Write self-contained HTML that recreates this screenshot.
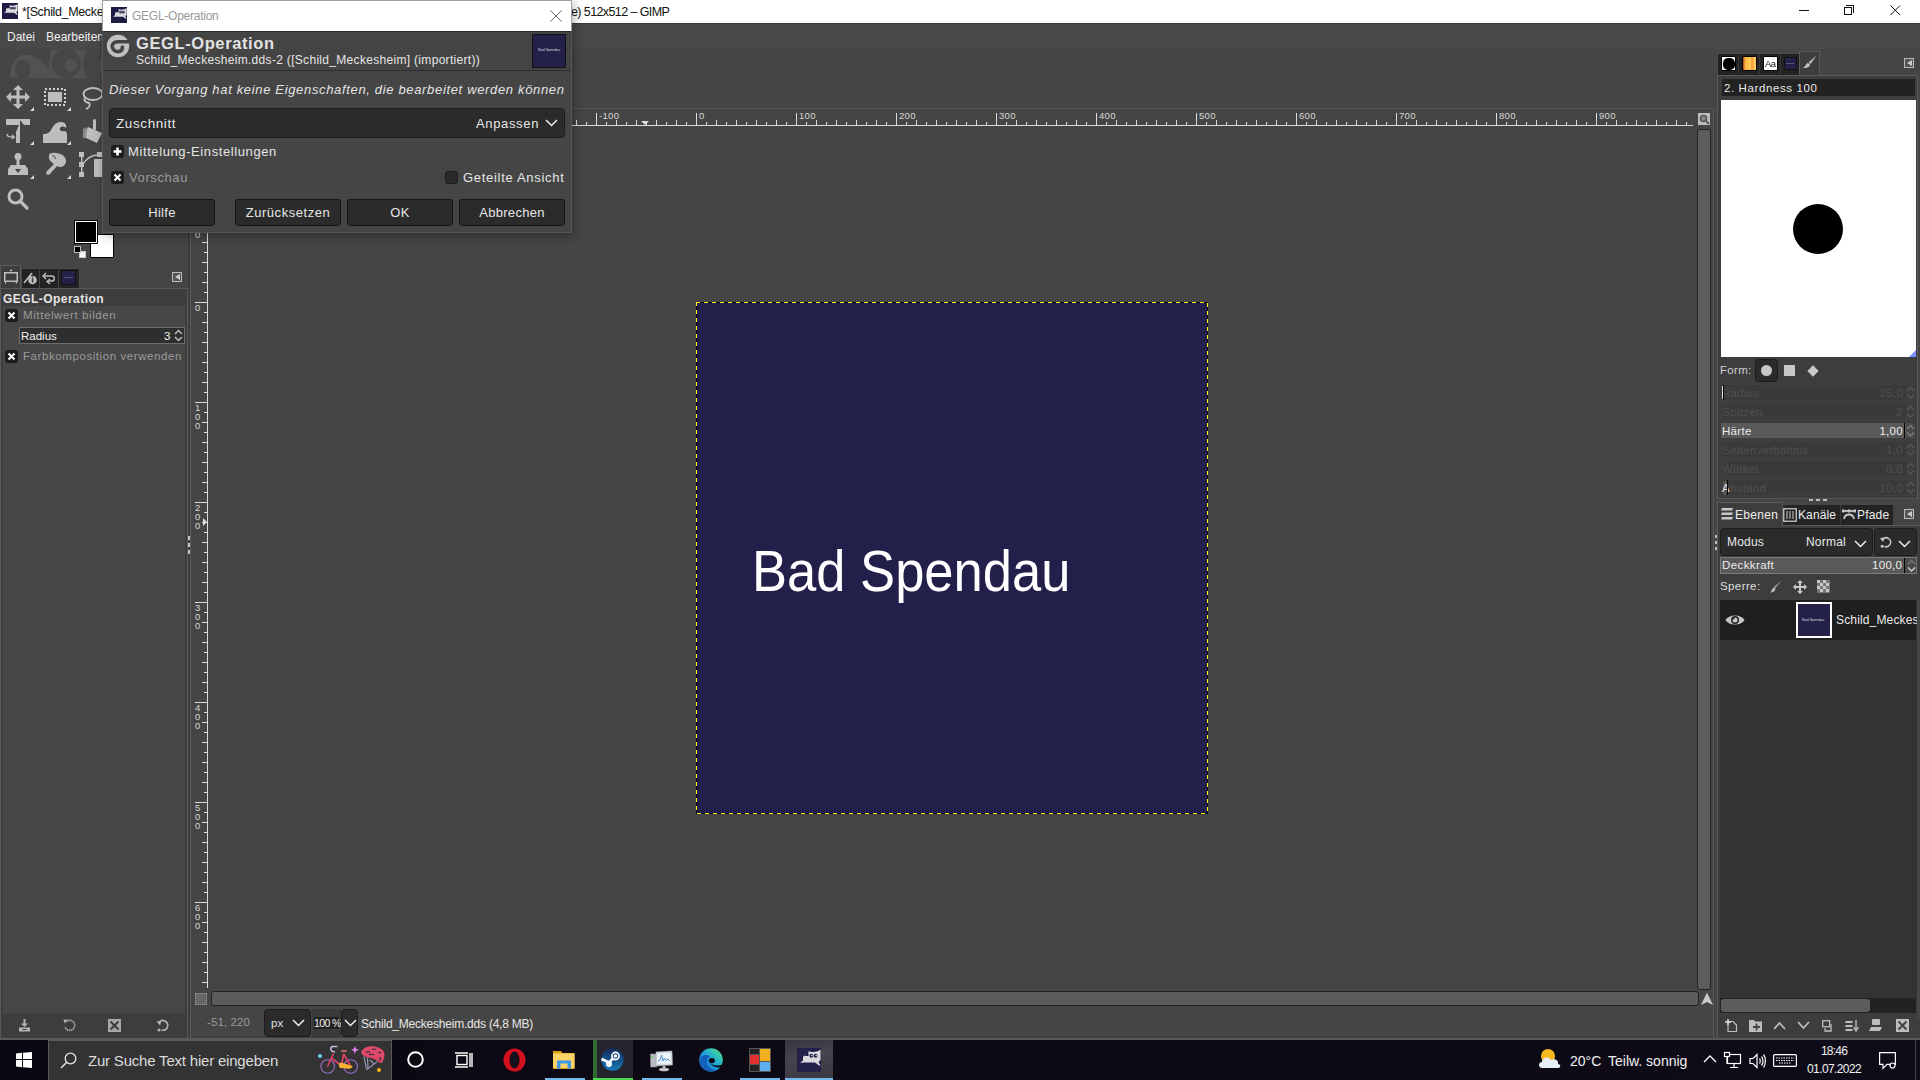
<!DOCTYPE html>
<html><head><meta charset="utf-8">
<style>
*{margin:0;padding:0;box-sizing:border-box}
html,body{width:1920px;height:1080px;overflow:hidden;background:#454545;font-family:"Liberation Sans",sans-serif;color:#e0e0e0}
.a{position:absolute}
.t{position:absolute;white-space:nowrap;line-height:1}
svg{position:absolute;overflow:visible}
</style></head><body>
<!-- ===== title bar ===== -->
<div class="a" style="left:0;top:0;width:1920px;height:23px;background:#fff"></div>
<svg style="left:2px;top:3px" width="16" height="16" viewBox="0 0 24 24"><rect width="24" height="24" fill="#1e1b45"/><path d="M6 9.5 C6 8 7.5 7.5 9 8 L11.5 8 L11.5 3 C14 4.5 20 4.5 23.5 1.5 L23.5 12 L21.5 14 L23.5 17.5 L22 17.5 L18 14.5 L8 14.5 L3 14.8 L6 12.5 Z" fill="#dcdce0"/><circle cx="14.4" cy="7.8" r="2" fill="#23204a"/><circle cx="18.6" cy="7.8" r="2" fill="#23204a"/><circle cx="15" cy="7.6" r="0.8" fill="#dcdce0"/><circle cx="19.2" cy="7.6" r="0.8" fill="#dcdce0"/></svg>
<div class="t" style="left:22px;top:6px;font-size:12.5px;color:#111;letter-spacing:-0.35px">*[Schild_Meckesheim] (importiert)-2.0</div>
<div class="t" style="left:571px;top:6px;font-size:12.5px;color:#111;letter-spacing:-0.6px">e) 512x512 – GIMP</div>
<!-- window controls -->
<div class="a" style="left:1799px;top:10px;width:10px;height:1px;background:#111"></div>
<div class="a" style="left:1844px;top:7px;width:8px;height:8px;border:1px solid #111"></div>
<div class="a" style="left:1846px;top:5px;width:8px;height:8px;border-top:1px solid #111;border-right:1px solid #111"></div>
<svg style="left:1890px;top:5px" width="11" height="11"><path d="M0.5 0.5L10 10M10 0.5L0.5 10" stroke="#111" stroke-width="1"/></svg>

<!-- ===== menu bar ===== -->
<div class="a" style="left:0;top:23px;width:1920px;height:26px;background:#494949"></div><div class="a" style="left:0;top:23px;width:1920px;height:1px;background:#3a3a3a"></div>
<div class="t" style="left:7px;top:31px;font-size:12px;color:#eee">Datei</div>
<div class="t" style="left:46px;top:31px;font-size:12px;color:#eee">Bearbeiten</div>


<!-- ===== left toolbox ===== -->
<div class="a" style="left:0;top:49px;width:188px;height:989px;background:#454545"></div>
<!-- wilber decoration -->
<svg style="left:0;top:0" width="102" height="82">
 <path d="M9.75 78 C9.75 62 18 54.5 26 54.5 C34 54.5 42 60 48.2 69 L51 50 L87.2 50 C84 56 83 60 83 64 C83 70 86 75 88 78 Z" fill="#525252"/>
 <circle cx="66.4" cy="63.6" r="14.4" fill="#464646"/>
 <circle cx="71" cy="65.5" r="6.3" fill="#525252"/>
 <ellipse cx="22.75" cy="69.5" rx="7.5" ry="9.8" fill="#464646"/>
 <rect x="9" y="78" width="80" height="2" fill="#464646"/>
 <path d="M102 56 C100 60 99 64 100 68 C100.5 72 101 74 102 75Z" fill="#525252"/>
</svg>
<!-- tools row1 -->
<svg style="left:6px;top:85px" width="24" height="24" fill="#bdbdbd">
 <path d="M12 0 L17 5 L13.5 5 L13.5 10.5 L19 10.5 L19 7 L24 12 L19 17 L19 13.5 L13.5 13.5 L13.5 19 L17 19 L12 24 L7 19 L10.5 19 L10.5 13.5 L5 13.5 L5 17 L0 12 L5 7 L5 10.5 L10.5 10.5 L10.5 5 L7 5 Z"/>
</svg>
<svg style="left:44px;top:88px" width="22" height="19">
 <rect x="1" y="1" width="20" height="16" fill="none" stroke="#d0d0d0" stroke-width="2" stroke-dasharray="2 2"/>
 <rect x="4" y="4" width="14" height="10" fill="#bdbdbd"/>
</svg>
<svg style="left:81px;top:86px" width="22" height="24">
 <ellipse cx="12" cy="8" rx="9.5" ry="6" fill="none" stroke="#bdbdbd" stroke-width="2"/>
 <path d="M4 12 C2 16 6 16 8 17 C10 19 8 22 5 23" fill="none" stroke="#bdbdbd" stroke-width="2"/>
</svg>
<!-- row2 -->
<svg style="left:6px;top:119px" width="24" height="24" fill="#bdbdbd">
 <path d="M0 0 H24 V6 H18 L14 1 L14 24 H10 V13 L13 6 H0 Z"/>
 <path d="M1 15 C1 18 3 18 8 18 L6 16 M8 18 L6 20" fill="none" stroke="#bdbdbd" stroke-width="1.5"/>
</svg>
<svg style="left:43px;top:121px" width="24" height="22" fill="#bdbdbd">
 <path d="M0 22 V13 C2 13 6 13 8 9 C11 3 14 1 18 1 C22 1 24 4 23 7 C21 5 18 5 17 7 C16 9 18 11 21 10 C22 10 24 11 24 13 V22 Z"/>
</svg>
<svg style="left:82px;top:119px" width="20" height="24" fill="#bdbdbd">
 <rect x="11" y="0" width="3" height="11" rx="1.5"/>
 <path d="M6 8 L20 14 L15 24 L2 18 Z"/>
 <path d="M1 10 L5 8 L4 19 L1 19Z" fill="#8a8a8a"/>
</svg>
<!-- row3 -->
<svg style="left:8px;top:153px" width="20" height="23" fill="#bdbdbd">
 <circle cx="10" cy="3.5" r="3.5"/>
 <rect x="8.5" y="5" width="3" height="8"/>
 <path d="M3 12 H17 L20 16 V22 H0 V16 Z"/>
 <path d="M7 16 L13 16 L10 20Z" fill="#454545"/>
</svg>
<svg style="left:46px;top:153px" width="21" height="22" fill="#bdbdbd">
 <path d="M6 0 C13 -1 21 3 20 9 C19 14 14 15 11 13 L4 21 C2 23 -1 21 1 18 L8 11 C5 9 2 6 3 3 C3 1 4 0 6 0Z"/>
 <path d="M6 3 C8 2 10 4 9 6" fill="none" stroke="#454545" stroke-width="1"/>
</svg>
<svg style="left:79px;top:152px" width="24" height="25" fill="#bdbdbd">
 <rect x="0" y="0" width="5" height="5"/><rect x="0" y="10" width="5" height="5"/><rect x="0" y="20" width="5" height="5"/>
 <rect x="2" y="4" width="1.5" height="17"/>
 <path d="M4 12 C8 6 14 3 19 3" fill="none" stroke="#bdbdbd" stroke-width="1.5"/>
 <rect x="18" y="0" width="5" height="5"/>
 <rect x="15" y="7" width="9" height="18" rx="1"/>
</svg>
<!-- row4 zoom -->
<svg style="left:7px;top:188px" width="22" height="22">
 <circle cx="8.5" cy="8.5" r="6.5" fill="none" stroke="#bdbdbd" stroke-width="3"/>
 <path d="M13 13 L20 20" stroke="#bdbdbd" stroke-width="3.2" stroke-linecap="round"/>
</svg>
<!-- small triangles -->
<svg style="left:0;top:0" width="120" height="220" fill="#d8d8d8">
 <path d="M34 111 L30 111 L34 107Z"/><path d="M71 111 L67 111 L71 107Z"/>
 <path d="M34 145 L30 145 L34 141Z"/><path d="M71 145 L67 145 L71 141Z"/>
 <path d="M34 179 L30 179 L34 175Z"/><path d="M71 179 L67 179 L71 175Z"/>
</svg>
<!-- fg/bg -->
<div class="a" style="left:90px;top:234px;width:24px;height:24px;background:#fff;border:1px solid #000;border-radius:1px"></div>
<div class="a" style="left:74px;top:220px;width:24px;height:24px;background:#000;border-radius:1px"></div>
<div class="a" style="left:75px;top:221px;width:22px;height:22px;border:1px solid #fff"></div>
<div class="a" style="left:79px;top:251px;width:7px;height:7px;background:#f4f4f4;border:1px solid #ccc"></div>
<div class="a" style="left:74px;top:246px;width:7px;height:7px;background:#000;border:1px solid #bbb"></div>

<!-- tool options dock tabs -->
<div class="a" style="left:21px;top:268px;width:59px;height:21px;background:#222;border:1px solid #4a4a4a;border-bottom:none"></div>
<div class="a" style="left:0px;top:265px;width:21px;height:25px;background:#3d3d3d;border:1px solid #5a5a5a;border-bottom:none"></div>
<div class="a" style="left:39px;top:268px;width:1px;height:20px;background:#444"></div>
<div class="a" style="left:58px;top:268px;width:1px;height:20px;background:#444"></div>
<svg style="left:4px;top:270px" width="14" height="14">
 <rect x="0.75" y="2.75" width="12.5" height="8.5" fill="none" stroke="#bdbdbd" stroke-width="1.5"/>
 <path d="M2 11 L1.5 13.5 M12 11 L12.5 13.5 M6 1 L7 0 L8 1" stroke="#bdbdbd" stroke-width="1.2" fill="none"/>
</svg>
<svg style="left:23px;top:271px" width="14" height="14">
 <path d="M1 12 L9 2" stroke="#bdbdbd" stroke-width="1.6"/>
 <circle cx="9.5" cy="9" r="4.3" fill="#bdbdbd"/>
 <rect x="8.8" y="7.5" width="1.5" height="4" fill="#2e2e2e"/><rect x="8.8" y="5.5" width="1.5" height="1.2" fill="#2e2e2e"/>
</svg>
<svg style="left:42px;top:271px" width="14" height="14">
 <path d="M1 5 H10 C13 5 13 10 10 10 H6" fill="none" stroke="#bdbdbd" stroke-width="1.4"/>
 <path d="M4 2 L1 5 L4 8 M8 8 L5 10.5 L8 13" fill="none" stroke="#bdbdbd" stroke-width="1.4"/>
</svg>
<div class="a" style="left:61px;top:270px;width:15px;height:15px;background:#23204a;border:1px solid #111"></div>
<div class="a" style="left:64px;top:277px;width:9px;height:1px;background:#55537a"></div>
<!-- collapse button -->
<div class="a" style="left:172px;top:272px;width:10px;height:10px;border:1px solid #bbb;background:#555"></div>
<svg style="left:174px;top:274px" width="7" height="7"><path d="M6 0 V6 L1 3Z" fill="#ccc"/></svg>

<!-- tool options panel -->
<div class="a" style="left:0px;top:288px;width:188px;height:751px;border:1px solid #5a5a5a;border-bottom:none;background:#3d3d3d"></div>
<div class="t" style="left:3px;top:293px;font-size:12px;font-weight:bold;color:#e6e6e6;letter-spacing:0.45px">GEGL-Operation</div>
<div class="a" style="left:3px;top:306px;width:182px;height:707px;background:#474747"></div>
<div class="a" style="left:5px;top:309px;width:13px;height:13px;background:#1c1c1c;border-radius:3px"></div>
<svg style="left:7px;top:311px" width="9" height="9"><path d="M1.5 1.5 L7.5 7.5 M7.5 1.5 L1.5 7.5" stroke="#fff" stroke-width="2"/></svg>
<div class="t" style="left:23px;top:310px;font-size:11.5px;color:#9a9a9a;letter-spacing:0.6px">Mittelwert bilden</div>
<div class="a" style="left:19px;top:327px;width:166px;height:17px;background:#2e2e2e;border:1px solid #6c6c6c"></div>
<div class="t" style="left:21px;top:331px;font-size:11.5px;color:#f0f0f0">Radius</div>
<div class="t" style="left:164px;top:331px;font-size:11.5px;color:#f0f0f0">3</div>
<svg style="left:174px;top:329px" width="9" height="13"><path d="M1 5 L4.5 1.5 L8 5 M1 8 L4.5 11.5 L8 8" fill="none" stroke="#bbb" stroke-width="1.5"/></svg>
<div class="a" style="left:5px;top:350px;width:13px;height:13px;background:#1c1c1c;border-radius:3px"></div>
<svg style="left:7px;top:352px" width="9" height="9"><path d="M1.5 1.5 L7.5 7.5 M7.5 1.5 L1.5 7.5" stroke="#fff" stroke-width="2"/></svg>
<div class="t" style="left:23px;top:351px;font-size:11.5px;color:#9a9a9a;letter-spacing:0.58px">Farbkomposition verwenden</div>

<!-- bottom buttons -->
<svg style="left:18px;top:1019px" width="13" height="13" fill="#b4b4b4">
 <rect x="5.5" y="0" width="2" height="5"/><path d="M3 4.5 H10 L6.5 8Z"/><path d="M1 8.5 H12 V12.5 H1Z"/><rect x="4.5" y="10" width="4" height="1" fill="#3d3d3d"/>
</svg>
<svg style="left:63px;top:1019px" width="13" height="13"><path d="M3.5 2.5 A5 5 0 1 1 2 8" fill="none" stroke="#b0b0b0" stroke-width="1.6" stroke-dasharray="1.4 0.6"/><path d="M0.5 0.5 L5 0.8 L1.5 4.5Z" fill="#b0b0b0"/></svg>
<svg style="left:108px;top:1019px" width="13" height="13"><rect width="13" height="13" fill="#a8a8a8"/><path d="M2.5 2.5L10.5 10.5M10.5 2.5L2.5 10.5" stroke="#3d3d3d" stroke-width="2"/></svg>
<svg style="left:156px;top:1019px" width="13" height="13"><path d="M3.5 3 A4.8 4.8 0 1 1 5.5 11" fill="none" stroke="#b4b4b4" stroke-width="1.6"/><path d="M0.5 2.5 L5.5 1.5 L4 6.5Z" fill="#b4b4b4"/><circle cx="3" cy="11" r="1.6" fill="#b4b4b4"/></svg>

<!-- separator toolbox/canvas -->
<div class="a" style="left:188px;top:49px;width:2px;height:989px;background:#3c3c3c"></div>
<div class="a" style="left:190px;top:49px;width:1px;height:989px;background:#5a5a5a"></div>
<div class="a" style="left:188px;top:536px;width:2px;height:4px;background:#c4c4c4"></div>
<div class="a" style="left:188px;top:543px;width:2px;height:4px;background:#c4c4c4"></div>
<div class="a" style="left:188px;top:550px;width:2px;height:4px;background:#c4c4c4"></div>


<!-- ===== canvas area ===== -->
<style>.rl{font-size:9.5px;color:#d8d8d8;letter-spacing:0.3px}</style>
<div class="a" style="left:191px;top:49px;width:1523px;height:989px;background:#454545"></div>
<div class="a" style="left:191px;top:108px;width:1521px;height:1px;background:#555"></div>

<svg style="left:0;top:0" width="1920" height="1080"><path d="M207 125.5H1693" stroke="#dcdcdc" stroke-width="1"/><path d="M216.5 120V125M226.5 122V125M236.5 120V125M246.5 122V125M256.5 120V125M266.5 122V125M276.5 120V125M286.5 122V125M296.5 113V125M306.5 122V125M316.5 120V125M326.5 122V125M336.5 120V125M346.5 122V125M356.5 120V125M366.5 122V125M376.5 120V125M386.5 122V125M396.5 113V125M406.5 122V125M416.5 120V125M426.5 122V125M436.5 120V125M446.5 122V125M456.5 120V125M466.5 122V125M476.5 120V125M486.5 122V125M496.5 113V125M506.5 122V125M516.5 120V125M526.5 122V125M536.5 120V125M546.5 122V125M556.5 120V125M566.5 122V125M576.5 120V125M586.5 122V125M596.5 113V125M606.5 122V125M616.5 120V125M626.5 122V125M636.5 120V125M646.5 122V125M656.5 120V125M666.5 122V125M676.5 120V125M686.5 122V125M696.5 113V125M706.5 122V125M716.5 120V125M726.5 122V125M736.5 120V125M746.5 122V125M756.5 120V125M766.5 122V125M776.5 120V125M786.5 122V125M796.5 113V125M806.5 122V125M816.5 120V125M826.5 122V125M836.5 120V125M846.5 122V125M856.5 120V125M866.5 122V125M876.5 120V125M886.5 122V125M896.5 113V125M906.5 122V125M916.5 120V125M926.5 122V125M936.5 120V125M946.5 122V125M956.5 120V125M966.5 122V125M976.5 120V125M986.5 122V125M996.5 113V125M1006.5 122V125M1016.5 120V125M1026.5 122V125M1036.5 120V125M1046.5 122V125M1056.5 120V125M1066.5 122V125M1076.5 120V125M1086.5 122V125M1096.5 113V125M1106.5 122V125M1116.5 120V125M1126.5 122V125M1136.5 120V125M1146.5 122V125M1156.5 120V125M1166.5 122V125M1176.5 120V125M1186.5 122V125M1196.5 113V125M1206.5 122V125M1216.5 120V125M1226.5 122V125M1236.5 120V125M1246.5 122V125M1256.5 120V125M1266.5 122V125M1276.5 120V125M1286.5 122V125M1296.5 113V125M1306.5 122V125M1316.5 120V125M1326.5 122V125M1336.5 120V125M1346.5 122V125M1356.5 120V125M1366.5 122V125M1376.5 120V125M1386.5 122V125M1396.5 113V125M1406.5 122V125M1416.5 120V125M1426.5 122V125M1436.5 120V125M1446.5 122V125M1456.5 120V125M1466.5 122V125M1476.5 120V125M1486.5 122V125M1496.5 113V125M1506.5 122V125M1516.5 120V125M1526.5 122V125M1536.5 120V125M1546.5 122V125M1556.5 120V125M1566.5 122V125M1576.5 120V125M1586.5 122V125M1596.5 113V125M1606.5 122V125M1616.5 120V125M1626.5 122V125M1636.5 120V125M1646.5 122V125M1656.5 120V125M1666.5 122V125M1676.5 120V125M1686.5 122V125" stroke="#dcdcdc" stroke-width="1"/>
<path d="M207.5 127V988" stroke="#dcdcdc" stroke-width="1"/><path d="M204 132.5H207M202 142.5H207M204 152.5H207M202 162.5H207M204 172.5H207M202 182.5H207M204 192.5H207M195 202.5H207M204 212.5H207M202 222.5H207M204 232.5H207M202 242.5H207M204 252.5H207M202 262.5H207M204 272.5H207M202 282.5H207M204 292.5H207M195 302.5H207M204 312.5H207M202 322.5H207M204 332.5H207M202 342.5H207M204 352.5H207M202 362.5H207M204 372.5H207M202 382.5H207M204 392.5H207M195 402.5H207M204 412.5H207M202 422.5H207M204 432.5H207M202 442.5H207M204 452.5H207M202 462.5H207M204 472.5H207M202 482.5H207M204 492.5H207M195 502.5H207M204 512.5H207M202 522.5H207M204 532.5H207M202 542.5H207M204 552.5H207M202 562.5H207M204 572.5H207M202 582.5H207M204 592.5H207M195 602.5H207M204 612.5H207M202 622.5H207M204 632.5H207M202 642.5H207M204 652.5H207M202 662.5H207M204 672.5H207M202 682.5H207M204 692.5H207M195 702.5H207M204 712.5H207M202 722.5H207M204 732.5H207M202 742.5H207M204 752.5H207M202 762.5H207M204 772.5H207M202 782.5H207M204 792.5H207M195 802.5H207M204 812.5H207M202 822.5H207M204 832.5H207M202 842.5H207M204 852.5H207M202 862.5H207M204 872.5H207M202 882.5H207M204 892.5H207M195 902.5H207M204 912.5H207M202 922.5H207M204 932.5H207M202 942.5H207M204 952.5H207M202 962.5H207M204 972.5H207M202 982.5H207" stroke="#dcdcdc" stroke-width="1"/>
<path d="M641 121H649L645 125Z" fill="#dcdcdc"/><path d="M203 518V526L207 522Z" fill="#dcdcdc"/></svg>
<div class="t rl" style="left:299px;top:111px">-400</div><div class="t rl" style="left:399px;top:111px">-300</div><div class="t rl" style="left:499px;top:111px">-200</div><div class="t rl" style="left:599px;top:111px">-100</div><div class="t rl" style="left:699px;top:111px">0</div><div class="t rl" style="left:799px;top:111px">100</div><div class="t rl" style="left:899px;top:111px">200</div><div class="t rl" style="left:999px;top:111px">300</div><div class="t rl" style="left:1099px;top:111px">400</div><div class="t rl" style="left:1199px;top:111px">500</div><div class="t rl" style="left:1299px;top:111px">600</div><div class="t rl" style="left:1399px;top:111px">700</div><div class="t rl" style="left:1499px;top:111px">800</div><div class="t rl" style="left:1599px;top:111px">900</div>
<div class="t rl" style="left:195px;top:203px">-</div><div class="t rl" style="left:195px;top:212px">1</div><div class="t rl" style="left:195px;top:221px">0</div><div class="t rl" style="left:195px;top:230px">0</div><div class="t rl" style="left:195px;top:303px">0</div><div class="t rl" style="left:195px;top:403px">1</div><div class="t rl" style="left:195px;top:412px">0</div><div class="t rl" style="left:195px;top:421px">0</div><div class="t rl" style="left:195px;top:503px">2</div><div class="t rl" style="left:195px;top:512px">0</div><div class="t rl" style="left:195px;top:521px">0</div><div class="t rl" style="left:195px;top:603px">3</div><div class="t rl" style="left:195px;top:612px">0</div><div class="t rl" style="left:195px;top:621px">0</div><div class="t rl" style="left:195px;top:703px">4</div><div class="t rl" style="left:195px;top:712px">0</div><div class="t rl" style="left:195px;top:721px">0</div><div class="t rl" style="left:195px;top:803px">5</div><div class="t rl" style="left:195px;top:812px">0</div><div class="t rl" style="left:195px;top:821px">0</div><div class="t rl" style="left:195px;top:903px">6</div><div class="t rl" style="left:195px;top:912px">0</div><div class="t rl" style="left:195px;top:921px">0</div>
<!-- image -->
<div class="a" style="left:696px;top:302px;width:512px;height:512px;background:#221f4b"></div>
<svg style="left:0;top:0" width="1920" height="1080"><path d="M696.5 302V814M1207.5 302V814M696 302.5H1208M696 813.5H1208" stroke="#000" stroke-width="1"/>
<path d="M696.5 302V814M696 302.5H1208M1207.5 303V815M697 813.5H1209" stroke="#ffff00" stroke-width="1" stroke-dasharray="4 4"/></svg>
<div class="t" style="left:752px;top:544px;font-size:56.5px;color:#fff;letter-spacing:0px;transform:scaleX(0.93);transform-origin:0 0">Bad Spendau</div>
<!-- zoom button -->
<div class="a" style="left:1698px;top:113px;width:12px;height:12px;background:#bdbdbd"></div>
<svg style="left:1699px;top:114px" width="11" height="11"><circle cx="4.5" cy="4.5" r="3" fill="#888" stroke="#555" stroke-width="1.5"/><path d="M7 7L10 10" stroke="#555" stroke-width="1.8"/></svg>
<!-- vertical scrollbar -->
<div class="a" style="left:1697px;top:129px;width:14px;height:861px;background:#5c5c5c;border:1px solid #222;border-radius:3px"></div>
<!-- horizontal scrollbar -->
<div class="a" style="left:211px;top:991px;width:1488px;height:15px;background:#5c5c5c;border:1px solid #222;border-radius:3px"></div>
<!-- quick mask -->
<div class="a" style="left:195px;top:993px;width:12px;height:12px;background:#666;border:1px dotted #9a9a9a"></div>
<!-- navigate -->
<svg style="left:1700px;top:992px" width="14" height="14"><path d="M7 0.5L13 13L7 10L1 13Z" fill="#c8c8c8"/></svg>
<!-- status bar -->
<div class="t" style="left:207px;top:1017px;font-size:11.5px;color:#9a9a9a;letter-spacing:0.1px">-51, 220</div>
<div class="a" style="left:264px;top:1009px;width:47px;height:28px;background:#2b2b2b;border:1px solid #1c1c1c;border-radius:4px"></div>
<div class="t" style="left:271px;top:1018px;font-size:11.5px;color:#e0e0e0">px</div>
<svg style="left:292px;top:1019px" width="13" height="8"><path d="M1 1L6.5 6.5L12 1" fill="none" stroke="#eee" stroke-width="1.5"/></svg>
<div class="a" style="left:312px;top:1009px;width:29px;height:28px;background:#3a3a3a"></div>
<div class="a" style="left:314px;top:1017px;width:25px;height:12px;background:#222"></div>
<div class="t" style="left:314px;top:1018px;font-size:10.5px;color:#f0f0f0;letter-spacing:-0.6px">100 %</div>
<div class="a" style="left:341px;top:1009px;width:17px;height:28px;background:#2b2b2b;border:1px solid #1c1c1c;border-radius:4px"></div>
<svg style="left:344px;top:1019px" width="13" height="8"><path d="M1 1L6.5 6.5L12 1" fill="none" stroke="#eee" stroke-width="1.5"/></svg>
<div class="t" style="left:361px;top:1018px;font-size:12px;color:#e6e6e6;letter-spacing:-0.22px">Schild_Meckesheim.dds (4,8 MB)</div>
<div class="a" style="left:191px;top:1037px;width:1523px;height:1px;background:#3c3c3c"></div>
<!-- dock separator right -->
<div class="a" style="left:1713px;top:108px;width:1px;height:930px;background:#555"></div>



<!-- ===== right dock ===== -->
<div class="a" style="left:1718px;top:49px;width:202px;height:989px;background:#454545"></div>
<!-- brush tabs -->
<div class="a" style="left:1717px;top:53px;width:83px;height:22px;background:#222;border:1px solid #4a4a4a;border-bottom:none"></div>
<div class="a" style="left:1738px;top:54px;width:1px;height:20px;background:#3a3a3a"></div>
<div class="a" style="left:1759px;top:54px;width:1px;height:20px;background:#3a3a3a"></div>
<div class="a" style="left:1780px;top:54px;width:1px;height:20px;background:#3a3a3a"></div>
<div class="a" style="left:1799px;top:51px;width:21px;height:25px;background:#3d3d3d;border:1px solid #5a5a5a;border-bottom:none"></div>
<div class="a" style="left:1721px;top:56px;width:15px;height:15px;background:#fff;border:1.5px solid #000;border-radius:1px"></div>
<div class="a" style="left:1722.5px;top:57.5px;width:12px;height:12px;background:#000;border-radius:42%"></div>
<div class="a" style="left:1742px;top:56px;width:15px;height:15px;border:1.5px solid #000;border-radius:1px;background:linear-gradient(90deg,#a04808,#f09030 12%,#ffc850 25%,#ffb830 38%,#ffd070 50%,#ffb040 62%,#ff9838 75%,#ffd060 88%,#ffc860)"></div>
<div class="a" style="left:1763px;top:56px;width:15px;height:15px;background:#fff;border:1.5px solid #000;border-radius:1px"></div>
<div class="t" style="left:1764.5px;top:59px;font-size:9.5px;color:#111;letter-spacing:-0.6px;will-change:transform">Aa</div>
<div class="a" style="left:1784px;top:57px;width:13px;height:13px;background:#23204a;border:1px solid #111"></div>
<div class="a" style="left:1786px;top:63px;width:8px;height:1px;background:#55537a"></div>
<svg style="left:1803px;top:55px" width="14" height="14"><path d="M13.5 0.5 L7.5 9 L5.5 7.5 Z" fill="#c4c4c4"/><path d="M5 8 C3 8.5 2.5 11.5 0 13 C3.5 13.5 7 12 7 9.5Z" fill="#c4c4c4"/></svg>
<div class="a" style="left:1904px;top:58px;width:10px;height:10px;border:1px solid #bbb;background:#555"></div>
<svg style="left:1906px;top:60px" width="7" height="7"><path d="M6 0 V6 L1 3Z" fill="#ccc"/></svg>
<!-- brush panel frame -->
<div class="a" style="left:1717px;top:75px;width:201px;height:424px;border:1px solid #5a5a5a;background:#3d3d3d"></div>
<div class="a" style="left:1722px;top:79px;width:193px;height:17px;background:#222"></div>
<div class="t" style="left:1724px;top:83px;font-size:11.5px;color:#e8e8e8;letter-spacing:0.6px">2. Hardness 100</div>
<div class="a" style="left:1721px;top:100px;width:195px;height:257px;background:#fff"></div>
<div class="a" style="left:1793px;top:204px;width:50px;height:50px;background:#000;border-radius:50%"></div>
<svg style="left:1909px;top:350px" width="7" height="7"><path d="M7 0V7H0Z" fill="#7a8cff"/></svg>
<div class="t" style="left:1720px;top:365px;font-size:11.5px;color:#cfcfcf;letter-spacing:0.3px">Form:</div>
<div class="a" style="left:1755px;top:359px;width:23px;height:23px;background:#2b2b2b;border:1px solid #1c1c1c;border-radius:4px"></div>
<div class="a" style="left:1761px;top:365px;width:11px;height:11px;background:#c8c8c8;border-radius:50%"></div>
<div class="a" style="left:1784px;top:365px;width:11px;height:11px;background:#c8c8c8"></div>
<div class="a" style="left:1808.5px;top:366.5px;width:8px;height:8px;background:#c8c8c8;transform:rotate(45deg)"></div>
<div class="a" style="left:1721px;top:385px;width:194px;height:15px;background:#3a3a3a"></div><div class="a" style="left:1721px;top:384px;width:194px;height:17px;border:1px solid #404040"></div><div class="t" style="left:1722px;top:388px;font-size:11.5px;color:#4f4f4f;letter-spacing:0.3px">Radius</div><div class="t" style="right:17px;top:388px;font-size:11.5px;color:#4f4f4f;letter-spacing:0.3px">25,0</div><div class="a" style="left:1906px;top:385px;width:9px;height:15px;background:#3e3e3e"></div><svg style="left:1906px;top:386px" width="9" height="13"><path d="M1 5 L4.5 1.5 L8 5 M1 8.5 L4.5 12 L8 8.5" fill="none" stroke="#555" stroke-width="1.5"/></svg><div class="a" style="left:1721px;top:404px;width:194px;height:15px;background:#3a3a3a"></div><div class="a" style="left:1721px;top:403px;width:194px;height:17px;border:1px solid #404040"></div><div class="t" style="left:1722px;top:407px;font-size:11.5px;color:#4f4f4f;letter-spacing:0.3px">Spitzen</div><div class="t" style="right:17px;top:407px;font-size:11.5px;color:#4f4f4f;letter-spacing:0.3px">2</div><div class="a" style="left:1906px;top:404px;width:9px;height:15px;background:#3e3e3e"></div><svg style="left:1906px;top:405px" width="9" height="13"><path d="M1 5 L4.5 1.5 L8 5 M1 8.5 L4.5 12 L8 8.5" fill="none" stroke="#555" stroke-width="1.5"/></svg><div class="a" style="left:1721px;top:423px;width:194px;height:15px;background:#595959"></div><div class="t" style="left:1722px;top:426px;font-size:11.5px;color:#ececec;letter-spacing:0.3px">Härte</div><div class="t" style="right:17px;top:426px;font-size:11.5px;color:#ececec;letter-spacing:0.3px">1,00</div><div class="a" style="left:1906px;top:423px;width:9px;height:15px;background:#4a4a4a"></div><svg style="left:1906px;top:424px" width="9" height="13"><path d="M1 5 L4.5 1.5 L8 5 M1 8.5 L4.5 12 L8 8.5" fill="none" stroke="#7a7a7a" stroke-width="1.5"/></svg><div class="a" style="left:1721px;top:442px;width:194px;height:15px;background:#3a3a3a"></div><div class="a" style="left:1721px;top:441px;width:194px;height:17px;border:1px solid #404040"></div><div class="t" style="left:1722px;top:445px;font-size:11.5px;color:#4f4f4f;letter-spacing:0.3px">Seitenverhältnis</div><div class="t" style="right:17px;top:445px;font-size:11.5px;color:#4f4f4f;letter-spacing:0.3px">1,0</div><div class="a" style="left:1906px;top:442px;width:9px;height:15px;background:#3e3e3e"></div><svg style="left:1906px;top:443px" width="9" height="13"><path d="M1 5 L4.5 1.5 L8 5 M1 8.5 L4.5 12 L8 8.5" fill="none" stroke="#555" stroke-width="1.5"/></svg><div class="a" style="left:1721px;top:461px;width:194px;height:15px;background:#3a3a3a"></div><div class="a" style="left:1721px;top:460px;width:194px;height:17px;border:1px solid #404040"></div><div class="t" style="left:1722px;top:464px;font-size:11.5px;color:#4f4f4f;letter-spacing:0.3px">Winkel</div><div class="t" style="right:17px;top:464px;font-size:11.5px;color:#4f4f4f;letter-spacing:0.3px">0,0</div><div class="a" style="left:1906px;top:461px;width:9px;height:15px;background:#3e3e3e"></div><svg style="left:1906px;top:462px" width="9" height="13"><path d="M1 5 L4.5 1.5 L8 5 M1 8.5 L4.5 12 L8 8.5" fill="none" stroke="#555" stroke-width="1.5"/></svg><div class="a" style="left:1721px;top:480px;width:194px;height:15px;background:#3a3a3a"></div><div class="a" style="left:1721px;top:479px;width:194px;height:17px;border:1px solid #404040"></div><div class="t" style="left:1722px;top:483px;font-size:11.5px;color:#4f4f4f;letter-spacing:0.3px">Abstand</div><div class="t" style="right:17px;top:483px;font-size:11.5px;color:#4f4f4f;letter-spacing:0.3px">10,0</div><div class="a" style="left:1906px;top:480px;width:9px;height:15px;background:#3e3e3e"></div><svg style="left:1906px;top:481px" width="9" height="13"><path d="M1 5 L4.5 1.5 L8 5 M1 8.5 L4.5 12 L8 8.5" fill="none" stroke="#555" stroke-width="1.5"/></svg>
<div class="a" style="left:1722px;top:386px;width:1px;height:13px;background:#ddd"></div>
<div class="a" style="left:1723px;top:385px;width:1px;height:15px;background:#000"></div>
<div class="a" style="left:1904px;top:423px;width:1px;height:15px;background:#000"></div>
<div class="a" style="left:1723px;top:481px;width:4px;height:14px;background:#555"></div>
<div class="t" style="left:1722px;top:483px;font-size:11.5px;color:#e0e0e0">A</div>
<div class="a" style="left:1727px;top:480px;width:1px;height:15px;background:#000"></div>
<div class="a" style="left:1718px;top:498px;width:201px;height:1px;background:#555"></div>
<div class="a" style="left:1809px;top:499px;width:4px;height:2px;background:#bbb"></div>
<div class="a" style="left:1816px;top:499px;width:4px;height:2px;background:#bbb"></div>
<div class="a" style="left:1823px;top:499px;width:4px;height:2px;background:#bbb"></div>

<!-- layers tabs -->
<div class="a" style="left:1717px;top:525px;width:203px;height:514px;background:#3d3d3d;border-left:1px solid #5a5a5a;border-top:1px solid #5a5a5a"></div>
<div class="a" style="left:1782px;top:505px;width:111px;height:20px;background:#242424"></div>
<div class="a" style="left:1840px;top:505px;width:1px;height:20px;background:#3a3a3a"></div>
<div class="a" style="left:1717px;top:502px;width:66px;height:25px;background:#3d3d3d;border:1px solid #5a5a5a;border-bottom:none"></div>
<svg style="left:1720px;top:507px" width="14" height="14" fill="#c8c8c8"><path d="M2 1H13L12 3.5H1Z"/><path d="M2 5.5H13L12 8H1Z"/><path d="M2 10H13L12 12.5H1Z"/></svg>
<div class="t" style="left:1735px;top:509px;font-size:12px;color:#eee;letter-spacing:0.3px">Ebenen</div>
<svg style="left:1783px;top:508px" width="14" height="14"><rect x="0.75" y="0.75" width="12.5" height="12.5" fill="none" stroke="#c8c8c8" stroke-width="1.3"/><path d="M4 3V11M7 3V11M10 3V11" stroke="#aaa" stroke-width="1.3"/></svg>
<div class="t" style="left:1798px;top:509px;font-size:12px;color:#eee;letter-spacing:0.1px">Kanäle</div>
<svg style="left:1842px;top:507px" width="14" height="14"><path d="M0 4H14" stroke="#c8c8c8" stroke-width="1.8"/><rect x="0" y="2.5" width="2.5" height="3" fill="#c8c8c8"/><rect x="11.5" y="2.5" width="2.5" height="3" fill="#c8c8c8"/><rect x="5.8" y="2.5" width="2.5" height="3" fill="#c8c8c8"/><path d="M2 12 C3 6 11 6 12 12" fill="none" stroke="#c8c8c8" stroke-width="1.8"/></svg>
<div class="t" style="left:1857px;top:509px;font-size:12px;color:#eee;letter-spacing:0.2px">Pfade</div>
<div class="a" style="left:1904px;top:509px;width:10px;height:10px;border:1px solid #bbb;background:#555"></div>
<svg style="left:1906px;top:511px" width="7" height="7"><path d="M6 0 V6 L1 3Z" fill="#ccc"/></svg>


<!-- modus -->
<div class="a" style="left:1720px;top:528px;width:153px;height:28px;background:#2b2b2b;border:1px solid #1c1c1c;border-radius:4px"></div>
<div class="t" style="left:1727px;top:536px;font-size:12px;color:#e8e8e8;letter-spacing:0.2px">Modus</div>
<div class="t" style="left:1806px;top:536px;font-size:12px;color:#e8e8e8;letter-spacing:0.2px">Normal</div>
<svg style="left:1854px;top:540px" width="13" height="8"><path d="M1 1L6.5 6.5L12 1" fill="none" stroke="#eee" stroke-width="1.5"/></svg>
<div class="a" style="left:1874px;top:528px;width:43px;height:28px;background:#2b2b2b;border:1px solid #1c1c1c;border-radius:4px"></div>
<svg style="left:1879px;top:536px" width="13" height="13"><path d="M4 3 A4.5 4.5 0 1 1 5.5 10.5" fill="none" stroke="#c8c8c8" stroke-width="1.5"/><path d="M1 2 L6 1.5 L4 6Z" fill="#c8c8c8"/><circle cx="3.2" cy="10.2" r="1.5" fill="#c8c8c8"/></svg>
<svg style="left:1898px;top:540px" width="13" height="8"><path d="M1 1L6.5 6.5L12 1" fill="none" stroke="#eee" stroke-width="1.5"/></svg>
<!-- deckkraft -->
<div class="a" style="left:1720px;top:557px;width:197px;height:17px;background:#595959;border:1px solid #7a7a7a"></div>
<div class="t" style="left:1722px;top:560px;font-size:11.5px;color:#ececec;letter-spacing:0.4px">Deckkraft</div>
<div class="t" style="left:1872px;top:560px;font-size:11.5px;color:#ececec;letter-spacing:0.3px">100,0</div>
<div class="a" style="left:1904px;top:558px;width:1px;height:15px;background:#000"></div>
<div class="a" style="left:1905px;top:558px;width:11px;height:15px;background:#4a4a4a"></div>
<svg style="left:1907px;top:559px" width="9" height="13"><path d="M1 5 L4.5 1.5 L8 5" fill="none" stroke="#777" stroke-width="1.5"/><path d="M1 8.5 L4.5 12 L8 8.5" fill="none" stroke="#ccc" stroke-width="1.5"/></svg>
<!-- sperre -->
<div class="t" style="left:1720px;top:581px;font-size:11.5px;color:#dedede;letter-spacing:0.4px">Sperre:</div>
<svg style="left:1770px;top:580px" width="13" height="13"><path d="M12 0.5 L5 8 L4 7 Z" fill="#bdbdbd"/><path d="M4 7.5 C2 8 2 11 0 12.5 C3 12.5 5.5 11 5.5 8.5Z" fill="#bdbdbd"/></svg>
<svg style="left:1793px;top:580px" width="14" height="14" fill="#c8c8c8"><path d="M7 0 L10 3 H8 V6 H11 V4 L14 7 L11 10 V8 H8 V11 H10 L7 14 L4 11 H6 V8 H3 V10 L0 7 L3 4 V6 H6 V3 H4Z"/></svg>
<svg style="left:1817px;top:580px" width="13" height="13"><rect width="13" height="13" fill="#777"/><path d="M0 0h3v3h-3zM6 0h3v3h-3zM3 3h3v3h-3zM9 3h3v3h-3zM0 6h3v3h-3zM6 6h3v3h-3zM3 9h3v3h-3zM9 9h3v3h-3z" fill="#c8c8c8"/></svg>
<div class="a" style="left:1715px;top:535px;width:2px;height:3px;background:#bbb"></div><div class="a" style="left:1715px;top:541px;width:2px;height:3px;background:#bbb"></div><div class="a" style="left:1715px;top:547px;width:2px;height:3px;background:#bbb"></div>
<!-- layer list -->
<div class="a" style="left:1720px;top:600px;width:197px;height:398px;background:#333"></div>
<div class="a" style="left:1720px;top:600px;width:196px;height:40px;background:#1f1f1f"></div>
<svg style="left:1725px;top:613px" width="20" height="14"><path d="M0.5 7 C4 1 16 1 19.5 7 C16 13 4 13 0.5 7Z" fill="#c8c8c8"/><circle cx="10" cy="7" r="4" fill="#1f1f1f"/><circle cx="10" cy="7" r="2.5" fill="#c8c8c8"/><circle cx="8.5" cy="5.5" r="1" fill="#1f1f1f"/></svg>
<div class="a" style="left:1796px;top:602px;width:36px;height:36px;background:#23204a;border:2px solid #fff"></div>
<div class="t" style="left:1802px;top:618px;font-size:4px;color:#ccc;letter-spacing:-0.2px">Bad Spendau</div>
<div class="t" style="left:1836px;top:614px;font-size:12px;color:#ececec;letter-spacing:0.15px">Schild_Meckesheim</div>
<div class="a" style="left:1917px;top:600px;width:3px;height:420px;background:#454545"></div>
<!-- list scrollbar -->
<div class="a" style="left:1720px;top:998px;width:196px;height:15px;background:#222"></div>
<div class="a" style="left:1721px;top:999px;width:149px;height:13px;background:#5c5c5c;border-radius:3px"></div>
<!-- layer buttons -->
<svg style="left:1725px;top:1019px" width="13" height="13"><path d="M3 2.5 H8 L11.5 6 V12.5 H3 Z" fill="none" stroke="#bdbdbd" stroke-width="1.2"/><path d="M0 3H6M3 0V6" stroke="#ddd" stroke-width="1.5"/></svg>
<svg style="left:1749px;top:1019px" width="13" height="13" fill="#bdbdbd"><path d="M0 1H5L6 2.5H13V13H0Z"/><path d="M4 8H11M7.5 4.5V11.5" stroke="#454545" stroke-width="1.8"/></svg>
<svg style="left:1773px;top:1021px" width="13" height="9"><path d="M1 8L6.5 2L12 8" fill="none" stroke="#bdbdbd" stroke-width="1.8"/></svg>
<svg style="left:1797px;top:1021px" width="13" height="9"><path d="M1 1L6.5 7L12 1" fill="none" stroke="#bdbdbd" stroke-width="1.8"/></svg>
<svg style="left:1822px;top:1020px" width="12" height="12"><rect x="0.7" y="0.7" width="7" height="6" fill="none" stroke="#bdbdbd" stroke-width="1.3"/><path d="M9 4V11H3V8" fill="none" stroke="#bdbdbd" stroke-width="1.3"/></svg>
<svg style="left:1845px;top:1020px" width="14" height="12" fill="#bdbdbd"><path d="M1 1H8L7 3H0Z"/><path d="M1 5H8L7 7H0Z"/><path d="M1 9H8L7 11H0Z"/><path d="M11 0V9M8.5 7L11 11L13.5 7" stroke="#bdbdbd" stroke-width="1.4" fill="none"/></svg>
<svg style="left:1869px;top:1019px" width="13" height="13" fill="#bdbdbd"><rect x="3" y="0" width="8" height="6" rx="1"/><path d="M2 8H13L11 12H0Z"/></svg>
<svg style="left:1896px;top:1019px" width="13" height="13"><rect width="13" height="13" fill="#bdbdbd"/><path d="M2.5 2.5L10.5 10.5M10.5 2.5L2.5 10.5" stroke="#454545" stroke-width="2"/></svg>



<!-- ===== taskbar ===== -->
<div class="a" style="left:0;top:1038px;width:1920px;height:2px;background:#5a5a5a"></div><div class="a" style="left:0;top:1040px;width:1920px;height:40px;background:linear-gradient(100deg,#09070f 0%,#0d0a16 40%,#0c0914 60%,#0f0c19 100%)"></div>
<svg style="left:16px;top:1052px" width="16" height="17" fill="#fff"><path d="M0 1.5L6 0.8V7H0Z"/><path d="M7 0.7L16 0V7H7Z"/><path d="M0 8H6V15.2L0 14.5Z"/><path d="M7 8H16V16L7 15.3Z"/></svg>
<div class="a" style="left:48px;top:1040px;width:344px;height:40px;background:#333;border:1px solid #5a5a5a;border-bottom:none"></div>
<svg style="left:60px;top:1052px" width="17" height="17"><circle cx="10.5" cy="6.5" r="5.3" fill="none" stroke="#e6e6e6" stroke-width="1.3"/><path d="M6.8 10.2L1 16" stroke="#e6e6e6" stroke-width="1.5"/></svg>
<div class="t" style="left:88px;top:1053px;font-size:15px;color:#dcdcdc;letter-spacing:-0.2px">Zur Suche Text hier eingeben</div>
<!-- bike & helmet -->
<svg style="left:310px;top:1040px" width="82" height="40">
 <circle cx="10" cy="16" r="2" fill="#6ad8ec"/>
 <circle cx="17.7" cy="26.5" r="6.8" fill="none" stroke="#9a70c8" stroke-width="1.1"/>
 <circle cx="40.6" cy="26.5" r="6.8" fill="none" stroke="#9a70c8" stroke-width="1.1"/>
 <path d="M17.5 26.5 L23.5 13.5 M22 18.5 L30.5 25 M34 13.5 L31.5 24 M34 14.5 L40 25" fill="none" stroke="#e4406a" stroke-width="1.6"/>
 <path d="M27.5 6.5 H23 C20 6.5 20 11 23 11.5 L25 12" fill="none" stroke="#c8b8e0" stroke-width="1.5"/>
 <rect x="31" y="10" width="6" height="2" rx="1" fill="#b07060"/>
 <path d="M29 24 C29 22.5 31 22.5 33 23 L42.5 26 C42 28.5 40 29 37 28.5 L30.5 28 C29 27.5 29 26 29 24Z" fill="#f8b030"/>
 <path d="M44.9 6 L46 8.8 L49 9.8 L46 11 L44.9 14 L43.8 11 L41 9.8 L43.8 8.8Z" fill="#e080f0"/>
 <path d="M51 12.5 C53 7 60 5.5 66 6.8 C71 8 74.5 11 74.5 14.5 C74.5 18 73 22 71 23.5 C68 21 64 18 58 17.5 C55 17.2 52 15 51 12.5Z" fill="#e04a6a"/>
 <path d="M56 12.5 C57 11.5 59 11.5 60 12.5 M62 9.5 C63 9 65 9 66 9.5 M59 15 C60 14 63 14 64 15 M68 12.5 C69 12 70.5 12.5 71 13.5 M70 17 C70.5 18 70.5 19.5 70 20.5" stroke="#2a2a3a" stroke-width="1.2" fill="none"/>
 <path d="M54 16.5 L56.5 29.5 M57.5 17.5 L58 29 M60 20 L64 24 L67.5 21.5 M57 29.5 L64 24" fill="none" stroke="#9090b0" stroke-width="1.3"/>
 <circle cx="69" cy="30" r="2" fill="#f8b810"/>
</svg>
<svg style="left:407px;top:1051px" width="17" height="17"><circle cx="8.5" cy="8.5" r="7.3" fill="none" stroke="#fff" stroke-width="2"/></svg>
<svg style="left:455px;top:1052px" width="18" height="16" fill="none" stroke="#fff" stroke-width="1.4"><rect x="2" y="3.5" width="10" height="9"/><path d="M0 1H13M0 15H13M15 1V15M17 1V15" /></svg>
<svg style="left:503px;top:1048px" width="23" height="24"><ellipse cx="11.5" cy="12" rx="11" ry="11.5" fill="#d2101e"/><ellipse cx="11.5" cy="12" rx="5" ry="8.5" fill="#14101c"/></svg>
<svg style="left:553px;top:1051px" width="22" height="19"><path d="M0 0H8L9.5 2H21.5V18H0Z" fill="#e0a010"/><path d="M0 2.5H21.5V17H0Z" fill="#fcd468"/><path d="M4 9.5H18V17.5H14.5V12.5H7.5V17.5H4Z" fill="#3a9ae8"/></svg>
<div class="a" style="left:545px;top:1078px;width:40px;height:2px;background:#76b9ed"></div>
<div class="a" style="left:593px;top:1040px;width:40px;height:40px;background:#25232c"></div>
<div class="a" style="left:593px;top:1040px;width:4px;height:38px;background:#2f6a30"></div>
<div class="a" style="left:593px;top:1078px;width:40px;height:2px;background:#4ed84e"></div>
<svg style="left:601px;top:1048px" width="23" height="23"><defs><linearGradient id="stg" x1="0" y1="0" x2="0" y2="1"><stop offset="0" stop-color="#142a5c"/><stop offset="1" stop-color="#1878b8"/></linearGradient></defs><circle cx="11.5" cy="11.5" r="11.2" fill="url(#stg)"/><circle cx="14.5" cy="8" r="3.6" fill="none" stroke="#fff" stroke-width="1.6"/><circle cx="14.5" cy="8" r="1.8" fill="#fff"/><path d="M0.5 11 L8 14.5 L12.5 10" stroke="#fff" stroke-width="2.6" fill="none"/><circle cx="8" cy="16" r="3" fill="#fff"/></svg>
<svg style="left:650px;top:1049px" width="24" height="24"><rect x="0.5" y="5" width="6" height="13" fill="#b8bcc0" stroke="#888" stroke-width="0.6"/><rect x="1.5" y="7" width="1.5" height="1.5" fill="#4c4"/>
<path d="M6 3 L22 2 L22.5 16 L6 17Z" fill="#d8dce0" stroke="#9aa" stroke-width="0.6"/><path d="M7.5 4.5 L20.5 4 L21 14.5 L7.5 15Z" fill="#eef4fa"/>
<path d="M8 12 L10 11 L11.5 6 L13 12 L14.5 9 L16 11.5 L18 10 L20 12" fill="none" stroke="#3a88d0" stroke-width="0.9"/>
<ellipse cx="14" cy="20.5" rx="5" ry="1.8" fill="#c8c8c8"/><rect x="12.5" y="17" width="3" height="3" fill="#b0b0b0"/></svg>
<div class="a" style="left:642px;top:1078px;width:40px;height:2px;background:#76b9ed"></div>
<svg style="left:699px;top:1048px" width="24" height="24"><defs><linearGradient id="edg" x1="0" y1="1" x2="1" y2="0"><stop offset="0" stop-color="#1a68c8"/><stop offset="0.45" stop-color="#1e9ae0"/><stop offset="0.7" stop-color="#30c0b8"/><stop offset="1" stop-color="#5ce070"/></linearGradient></defs>
<circle cx="12" cy="12" r="11.8" fill="url(#edg)"/>
<path d="M0.5 13 C1 7 7.5 5.5 11.5 8.5 C8 9.5 7 14 9 17.5 C11 21 15 22.5 18 22 C13 25 1.5 23 0.5 13Z" fill="#1560b8"/>
<ellipse cx="12.8" cy="12.6" rx="3" ry="2.6" fill="#0c0914"/>
<path d="M11 14.5 C13 17.5 18 18.5 23.5 16.5 L24 24 L15 24 C18 23 20.5 21 21.8 19.2 C17.5 20 13 18.5 11 14.5Z" fill="#0c0914"/>
</svg>
<svg style="left:749px;top:1048px" width="22" height="24"><rect x="0" y="0" width="22" height="24" fill="#555"/><rect x="1" y="1" width="9" height="5" fill="#222"/><rect x="1" y="7" width="9" height="9" fill="#e03030"/><rect x="11" y="1" width="10" height="12" fill="#f0b020"/><rect x="11" y="14" width="10" height="9" fill="#60b0f0"/><rect x="1" y="17" width="9" height="6" fill="#222"/></svg>
<div class="a" style="left:740px;top:1078px;width:40px;height:2px;background:#76b9ed"></div>
<div class="a" style="left:785px;top:1040px;width:48px;height:40px;background:linear-gradient(170deg,#3a3640,#46424e 40%,#3a3840)"></div>
<svg style="left:797px;top:1048px" width="24" height="24" viewBox="0 0 24 24"><rect width="24" height="24" fill="#23204a"/><path d="M6 9.5 C6 8 7.5 7.5 9 8 L11.5 8 L11.5 3 C14 4.5 20 4.5 23.5 1.5 L23.5 12 L21.5 14 L23.5 17.5 L22 17.5 L18 14.5 L8 14.5 L3 14.8 L6 12.5 Z" fill="#dcdce0"/><circle cx="14.4" cy="7.8" r="2" fill="#23204a"/><circle cx="18.6" cy="7.8" r="2" fill="#23204a"/><circle cx="15" cy="7.6" r="0.8" fill="#dcdce0"/><circle cx="19.2" cy="7.6" r="0.8" fill="#dcdce0"/></svg>
<div class="a" style="left:785px;top:1078px;width:48px;height:2px;background:#76b9ed"></div>
<!-- tray -->
<svg style="left:1538px;top:1048px" width="24" height="22"><circle cx="10" cy="8" r="7" fill="#f8b820"/><path d="M4 20 C0 20 0 14 4 14 C4 9 11 8 13 12 C16 10 21 12 20 16 C23 16 23 20 20 20Z" fill="#e8eef8"/></svg>
<div class="t" style="left:1570px;top:1054px;font-size:14px;color:#f2f2f2">20°C</div>
<div class="t" style="left:1608px;top:1054px;font-size:14px;color:#f2f2f2">Teilw. sonnig</div>
<svg style="left:1703px;top:1054px" width="14" height="9"><path d="M1 8L7 2L13 8" fill="none" stroke="#fff" stroke-width="1.3"/></svg>
<svg style="left:1724px;top:1052px" width="18" height="17" fill="none" stroke="#fff" stroke-width="1.2"><rect x="3.5" y="2.5" width="13" height="9"/><path d="M10 11.5V15M6 15.5H14"/><rect x="0.5" y="0.5" width="5" height="4" fill="#0e0b19"/><path d="M3 4.5V12"/></svg>
<svg style="left:1749px;top:1053px" width="17" height="16" fill="none" stroke="#fff" stroke-width="1.2"><path d="M1 5.5H4L8 1.5V14.5L4 10.5H1Z"/><path d="M10.5 5.5C11.5 6.5 11.5 9.5 10.5 10.5M12.5 3.5C14.5 5.5 14.5 10.5 12.5 12.5M14.5 1.5C17 4.5 17 11.5 14.5 14.5"/></svg>
<svg style="left:1773px;top:1054px" width="24" height="13" fill="none" stroke="#fff" stroke-width="1.2"><rect x="0.6" y="0.6" width="22.8" height="11.8" rx="1"/><path d="M3 4H21M3 6.5H21M6 9H18" stroke-dasharray="1.5 1"/></svg>
<div class="t" style="left:1821px;top:1045px;font-size:12px;color:#f2f2f2;letter-spacing:-0.8px">18:46</div>
<div class="t" style="left:1807px;top:1062px;font-size:12px;color:#f2f2f2;letter-spacing:-0.6px;margin-top:1px">01.07.2022</div>
<svg style="left:1879px;top:1052px" width="17" height="18" fill="none" stroke="#fff" stroke-width="1.2"><path d="M0.6 0.6H16.4V12.4H8L4 16.4V12.4H0.6Z"/><circle cx="13.5" cy="13.5" r="2.5" fill="#0e0b19"/></svg>
<div class="a" style="left:1915px;top:1040px;width:1px;height:40px;background:#444"></div>

<!-- ===== dialog ===== -->
<div class="a" style="left:102px;top:0;width:470px;height:233px;background:#454545;border:1px solid #555;box-shadow:2px 3px 10px rgba(0,0,0,0.3)"></div>
<div class="a" style="left:103px;top:1px;width:468px;height:30px;background:#fff"></div><div class="a" style="left:102px;top:0;width:470px;height:1px;background:#a0a0a0"></div><div class="a" style="left:102px;top:0;width:1px;height:31px;background:#a0a0a0"></div><div class="a" style="left:571px;top:0;width:1px;height:31px;background:#a0a0a0"></div>
<svg style="left:111px;top:7px" width="16" height="16" viewBox="0 0 24 24"><rect width="24" height="24" fill="#1e1b45"/><path d="M6 9.5 C6 8 7.5 7.5 9 8 L11.5 8 L11.5 3 C14 4.5 20 4.5 23.5 1.5 L23.5 12 L21.5 14 L23.5 17.5 L22 17.5 L18 14.5 L8 14.5 L3 14.8 L6 12.5 Z" fill="#dcdce0"/><circle cx="14.4" cy="7.8" r="2" fill="#23204a"/><circle cx="18.6" cy="7.8" r="2" fill="#23204a"/><circle cx="15" cy="7.6" r="0.8" fill="#dcdce0"/><circle cx="19.2" cy="7.6" r="0.8" fill="#dcdce0"/></svg>
<div class="t" style="left:132px;top:10px;font-size:12px;color:#9a9a9a;letter-spacing:-0.25px">GEGL-Operation</div>
<svg style="left:550px;top:10px" width="12" height="12"><path d="M0.5 0.5L11.5 11.5M11.5 0.5L0.5 11.5" stroke="#666" stroke-width="1"/></svg>
<!-- header -->
<div class="a" style="left:103px;top:31px;width:468px;height:40px;background:#444;border-bottom:1px solid #2e2e2e;border-top:1px solid #2a2a2a"></div>
<svg style="left:102px;top:30px" width="34" height="34"><circle cx="16" cy="16" r="11.2" fill="#c0c0c0"/><path d="M30 11.7 H15.8 C11.5 11.7 10 14.5 10.3 17 C10.8 20.5 14 22 17 21.5 C19.5 21 20.7 19 20.3 17.2" fill="none" stroke="#444" stroke-width="3.6" stroke-linecap="round"/></svg>
<div class="t" style="left:136px;top:35px;font-size:16.5px;font-weight:bold;color:#e2e2e2;letter-spacing:0.6px">GEGL-Operation</div>
<div class="t" style="left:136px;top:54px;font-size:12px;color:#e6e6e6;letter-spacing:0.31px">Schild_Meckesheim.dds-2 ([Schild_Meckesheim] (importiert))</div>
<div class="a" style="left:532px;top:34px;width:34px;height:34px;background:#23204a;border:1px solid #111"></div>
<div class="t" style="left:538px;top:48px;font-size:4px;color:#ccc;letter-spacing:-0.2px">Bad Spendau</div>
<!-- body -->
<div class="t" style="left:109px;top:83px;font-size:13px;font-style:italic;color:#e4e4e4;letter-spacing:0.66px">Dieser Vorgang hat keine Eigenschaften, die bearbeitet werden können</div>
<div class="a" style="left:109px;top:108px;width:456px;height:30px;background:#2b2b2b;border:1px solid #1c1c1c;border-radius:4px"></div>
<div class="t" style="left:116px;top:117px;font-size:13.5px;color:#e6e6e6;letter-spacing:0.6px">Zuschnitt</div>
<div class="t" style="left:476px;top:117px;font-size:13px;color:#e6e6e6;letter-spacing:0.65px">Anpassen</div>
<svg style="left:545px;top:119px" width="13" height="8"><path d="M1 1L6.5 6.5L12 1" fill="none" stroke="#eee" stroke-width="1.5"/></svg>
<div class="a" style="left:111px;top:145px;width:13px;height:13px;background:#1c1c1c;border-radius:3px"></div>
<svg style="left:113px;top:147px" width="9" height="9"><path d="M4.5 0.5V8.5M0.5 4.5H8.5" stroke="#fff" stroke-width="2.6"/></svg>
<div class="t" style="left:128px;top:145px;font-size:13px;color:#e6e6e6;letter-spacing:0.6px">Mittelung-Einstellungen</div>
<div class="a" style="left:111px;top:171px;width:13px;height:13px;background:#1c1c1c;border-radius:3px"></div>
<svg style="left:113px;top:173px" width="9" height="9"><path d="M1.5 1.5 L7.5 7.5 M7.5 1.5 L1.5 7.5" stroke="#fff" stroke-width="2"/></svg>
<div class="t" style="left:129px;top:171px;font-size:13px;color:#9a9a9a;letter-spacing:0.6px">Vorschau</div>
<div class="a" style="left:445px;top:171px;width:13px;height:13px;background:#2b2b2b;border:1px solid #1c1c1c;border-radius:3px"></div>
<div class="t" style="left:463px;top:171px;font-size:13px;color:#e6e6e6;letter-spacing:0.7px">Geteilte Ansicht</div>
<!-- buttons -->
<div class="a" style="left:109px;top:199px;width:106px;height:27px;background:#2b2b2b;border:1px solid #161616;border-radius:3px"></div>
<div class="a" style="left:235px;top:199px;width:106px;height:27px;background:#2b2b2b;border:1px solid #161616;border-radius:3px"></div>
<div class="a" style="left:347px;top:199px;width:106px;height:27px;background:#2b2b2b;border:1px solid #161616;border-radius:3px"></div>
<div class="a" style="left:459px;top:199px;width:106px;height:27px;background:#2b2b2b;border:1px solid #161616;border-radius:3px"></div>
<div class="t" style="left:109px;width:106px;text-align:center;top:206px;font-size:13px;color:#e6e6e6;letter-spacing:0.3px">Hilfe</div>
<div class="t" style="left:235px;width:106px;text-align:center;top:206px;font-size:13px;color:#e6e6e6;letter-spacing:0.55px">Zurücksetzen</div>
<div class="t" style="left:347px;width:106px;text-align:center;top:206px;font-size:13px;color:#e6e6e6;letter-spacing:0.3px">OK</div>
<div class="t" style="left:459px;width:106px;text-align:center;top:206px;font-size:13px;color:#e6e6e6;letter-spacing:0.3px">Abbrechen</div>

</body></html>
